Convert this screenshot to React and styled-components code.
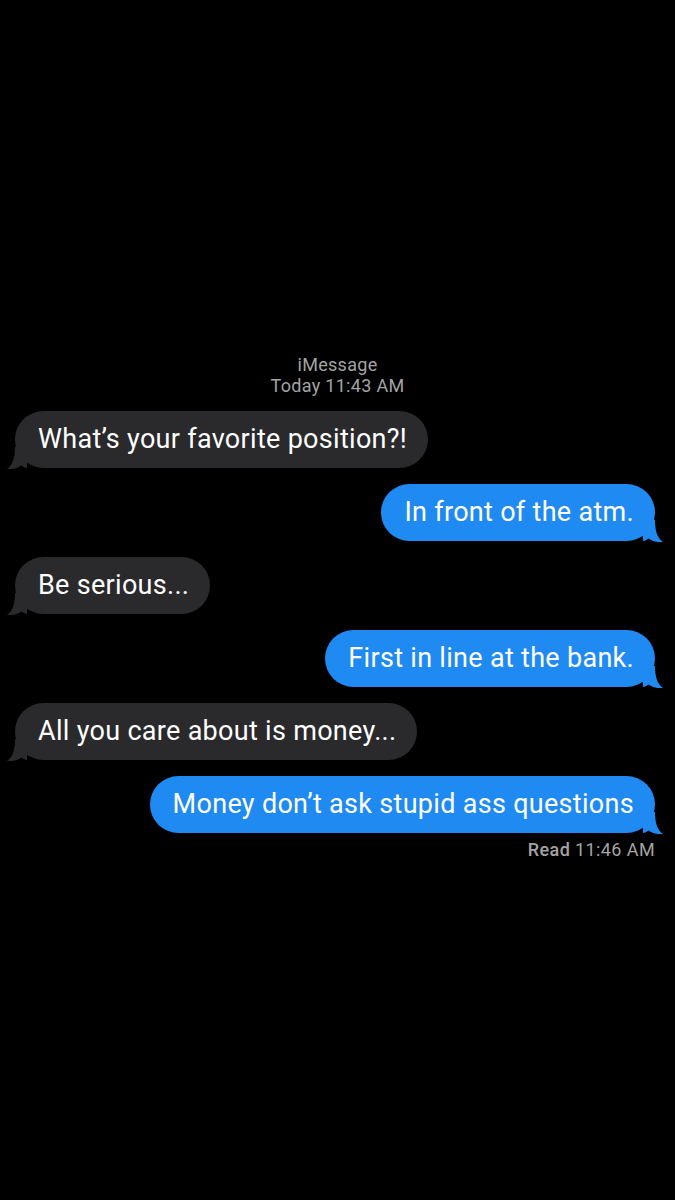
import React from "react";
import styled, { createGlobalStyle } from "styled-components";

const GlobalStyle = createGlobalStyle`
  html, body {
    margin: 0;
    padding: 0;
    background: #000;
  }
  body {
    font-family: Roboto, "Liberation Sans", sans-serif;
    -webkit-font-smoothing: antialiased;
  }
`;

const messages = [
  { from: "them", text: "What\u2019s your favorite position?!" },
  { from: "me", text: "In front of the atm." },
  { from: "them", text: "Be serious..." },
  { from: "me", text: "First in line at the bank." },
  { from: "them", text: "All you care about is money..." },
  { from: "me", text: "Money don\u2019t ask stupid ass questions" },
];

export default function App() {
  return (
    <>
      <GlobalStyle />
      <Screen>
        <Header>
          <span>iMessage</span>
          <span>Today 11:43 AM</span>
        </Header>
        <Thread>
          {messages.map((m, i) => (
            <Row key={i} $me={m.from === "me"}>
              <Bubble $me={m.from === "me"}>
                {m.text}
                <Tail $me={m.from === "me"} viewBox="0 0 20 22">
                  <path d="M0 0 H12 C12 10 14 18 20 22 C14.5 22.6 9.5 21.4 5.5 18.6 C3.5 20 2 21 0 21 Z" />
                </Tail>
              </Bubble>
            </Row>
          ))}
          <Receipt>
            <b>Read</b> 11:46 AM
          </Receipt>
        </Thread>
      </Screen>
    </>
  );
}

const Screen = styled.div`
  width: 675px;
  min-height: 1200px;
  background: #000;
  padding-top: 354px;
  box-sizing: border-box;
`;

const Header = styled.div`
  display: flex;
  flex-direction: column;
  align-items: center;
  color: #a3a3a3;
  font-size: 18px;
  letter-spacing: 0.3px;
  line-height: 21px;
  margin-bottom: 15px;
`;

const Thread = styled.div`
  display: flex;
  flex-direction: column;
  gap: 16px;
  padding: 0 20px 0 15px;
`;

const Row = styled.div`
  display: flex;
  justify-content: ${(p) => (p.$me ? "flex-end" : "flex-start")};
`;

const Bubble = styled.div`
  position: relative;
  background: ${(p) => (p.$me ? "#1f8af2" : "#2a2a2c")};
  color: #fff;
  font-size: 27px;
  letter-spacing: 0.3px;
  line-height: 29px;
  padding: 14px 21px 14px 23px;
  border-radius: 29px;
  white-space: nowrap;
`;

const Tail = styled.svg`
  position: absolute;
  width: 20px;
  height: 22px;
  bottom: -1px;
  ${(p) => (p.$me ? "right: -8px;" : "left: -8px; transform: scaleX(-1);")}
  fill: ${(p) => (p.$me ? "#1f8af2" : "#2a2a2c")};
`;

const Receipt = styled.div`
  align-self: flex-end;
  margin-top: -9px;
  color: #a3a3a3;
  font-size: 18px;
  letter-spacing: 0.4px;
  line-height: 20px;

  b {
    font-weight: 500;
  }
`;
